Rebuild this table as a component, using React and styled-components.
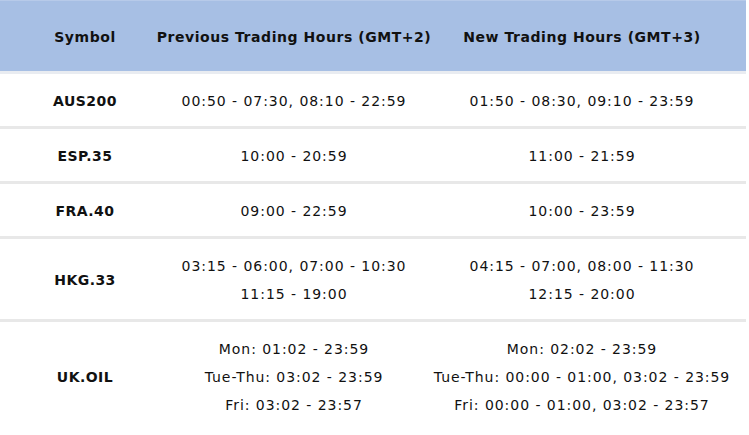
import React from "react";
import styled, { createGlobalStyle } from "styled-components";

const Global = createGlobalStyle`
  html, body { margin: 0; padding: 0; background: #ffffff; }
  body { font-family: "DejaVu Sans", "Verdana", sans-serif; }
`;

const Table = styled.table`
  width: 746px;
  border-collapse: collapse;
  table-layout: fixed;
  font-size: 14px;
  color: #111111;
`;

const HeadRow = styled.tr`
  background: #a7bfe4;
  border-top: 1px solid #b7cae9;
  border-bottom: 3px solid #e9ecf1;
`;

const HeadCell = styled.th`
  height: 70px;
  padding: 0;
  font-weight: bold;
  vertical-align: middle;
  color: #111111;
`;

const HeadLabel = styled.div`
  display: flex;
  justify-content: center;
  white-space: nowrap;
  letter-spacing: 0.55px;
  padding-top: 1px;
`;

const Row = styled.tr`
  border-bottom: ${(p) => (p.$last ? "none" : "3px solid #e8e8e8")};
`;

const SymbolCell = styled.td`
  padding: 13px 0 11px;
  font-weight: bold;
  letter-spacing: 0.45px;
  text-align: center;
  vertical-align: middle;
`;

const HoursCell = styled.td`
  padding: 13px 0 11px;
  text-align: center;
  vertical-align: middle;
  letter-spacing: 0.95px;
`;

const Line = styled.div`
  line-height: 28px;
  white-space: nowrap;
`;

const rows = [
  { s: "AUS200", p: ["00:50 - 07:30, 08:10 - 22:59"], n: ["01:50 - 08:30, 09:10 - 23:59"] },
  { s: "ESP.35", p: ["10:00 - 20:59"], n: ["11:00 - 21:59"] },
  { s: "FRA.40", p: ["09:00 - 22:59"], n: ["10:00 - 23:59"] },
  { s: "HKG.33", p: ["03:15 - 06:00, 07:00 - 10:30", "11:15 - 19:00"], n: ["04:15 - 07:00, 08:00 - 11:30", "12:15 - 20:00"] },
  {
    s: "UK.OIL",
    p: ["Mon: 01:02 - 23:59", "Tue-Thu: 03:02 - 23:59", "Fri: 03:02 - 23:57"],
    n: ["Mon: 02:02 - 23:59", "Tue-Thu: 00:00 - 01:00, 03:02 - 23:59", "Fri: 00:00 - 01:00, 03:02 - 23:57"],
  },
];

export default function App() {
  return (
    <>
      <Global />
      <Table>
        <colgroup>
          <col style={{ width: 170 }} />
          <col style={{ width: 248 }} />
          <col style={{ width: 328 }} />
        </colgroup>
        <thead>
          <HeadRow>
            <HeadCell><HeadLabel>Symbol</HeadLabel></HeadCell>
            <HeadCell><HeadLabel>Previous Trading Hours (GMT+2)</HeadLabel></HeadCell>
            <HeadCell><HeadLabel>New Trading Hours (GMT+3)</HeadLabel></HeadCell>
          </HeadRow>
        </thead>
        <tbody>
          {rows.map((r, idx) => (
            <Row key={r.s} $last={idx === rows.length - 1}>
              <SymbolCell>{r.s}</SymbolCell>
              <HoursCell>
                {r.p.map((l, i) => (
                  <Line key={i}>{l}</Line>
                ))}
              </HoursCell>
              <HoursCell>
                {r.n.map((l, i) => (
                  <Line key={i}>{l}</Line>
                ))}
              </HoursCell>
            </Row>
          ))}
        </tbody>
      </Table>
    </>
  );
}
